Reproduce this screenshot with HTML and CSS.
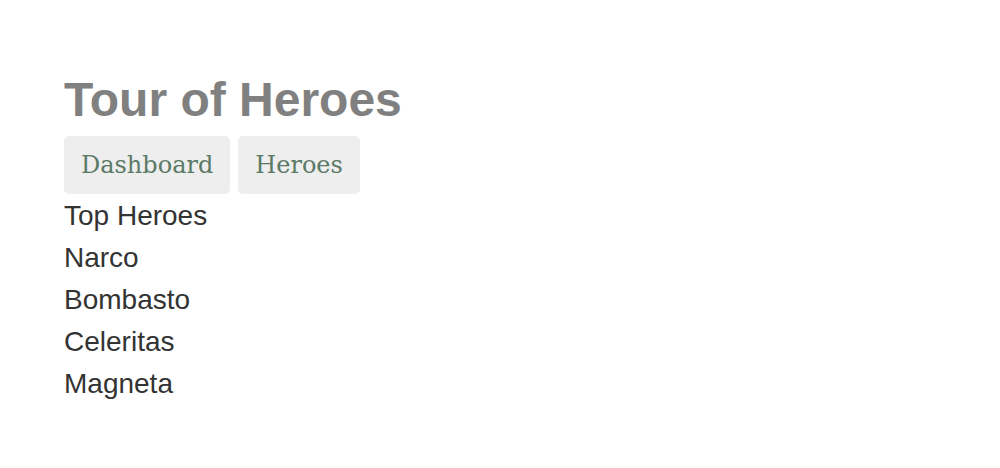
FILE: index.html
```html
<!DOCTYPE html>
<html>
<head>
<meta charset="utf-8">
<title>Tour of Heroes</title>
<link rel="stylesheet" href="styles.css">
</head>
<body>
<main class="app">
  <h1 class="title">Tour of Heroes</h1>
  <nav class="nav">
    <a class="nav-link" href="#">Dashboard</a>
    <a class="nav-link" href="#">Heroes</a>
  </nav>
  <section class="dashboard">
    <h3 class="dash-title">Top Heroes</h3>
    <ul class="hero-list">
      <li class="hero">Narco</li>
      <li class="hero">Bombasto</li>
      <li class="hero">Celeritas</li>
      <li class="hero">Magneta</li>
    </ul>
  </section>
</main>
</body>
</html>
```

FILE: styles.css
```css
html, body {
  margin: 0;
  padding: 0;
  background: #ffffff;
}
body {
  font-family: "Liberation Sans", Arial, sans-serif;
}
.app {
  padding: 72px 64px 0 64px;
}
.title {
  margin: 0;
  font-family: "Liberation Sans", Arial, sans-serif;
  font-weight: bold;
  font-size: 48px;
  line-height: 56px;
  color: #808080;
}
.nav {
  display: flex;
  gap: 8px;
  margin-top: 8px;
}
.nav-link {
  display: block;
  padding: 16px 17px;
  line-height: 26px;
  font-family: "DejaVu Serif", Georgia, serif;
  font-size: 24px;
  color: #5b7a66;
  background: #eeeeee;
  border-radius: 5px;
  text-decoration: none;
}
.dashboard {
  margin-top: 1px;
}
.dash-title,
.hero {
  margin: 0;
  font-weight: normal;
  font-size: 28px;
  line-height: 42px;
  color: #333333;
}
.hero-list {
  margin: 0;
  padding: 0;
  list-style: none;
}
```
